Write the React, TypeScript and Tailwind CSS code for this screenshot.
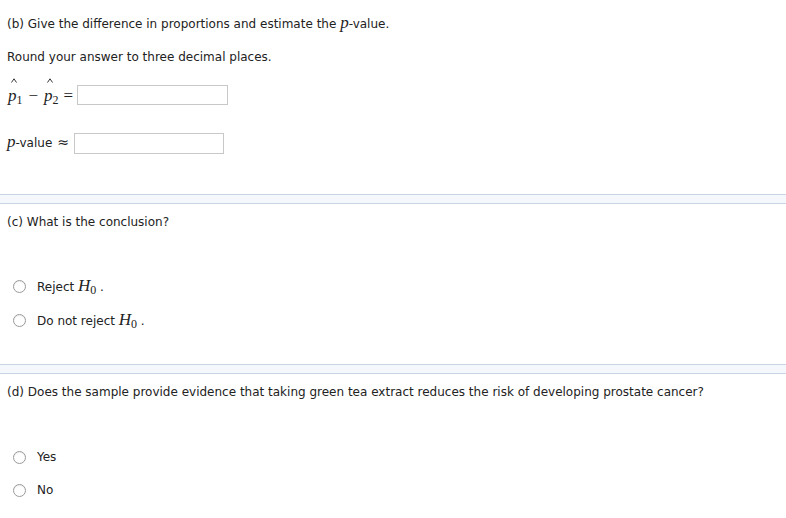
import React from "react";

const MathI: React.FC<{ children: React.ReactNode }> = ({ children }) => (
  <span className="italic text-[17px] leading-none font-['Liberation_Serif',serif]">{children}</span>
);

const Hat = () => (
  <svg className="absolute left-[3px] -top-[9px]" width="6" height="5" viewBox="0 0 6 5">
    <path d="M0.5 4.5 L3 0.8 L5.5 4.5" fill="none" stroke="#222" strokeWidth="0.9" />
  </svg>
);

const PHat: React.FC<{ sub: string }> = ({ sub }) => (
  <span className="relative inline-block leading-none font-['Liberation_Serif',serif]">
    <Hat />
    <span className="italic text-[17px]">p</span>
    <span className="text-[12px] relative top-[3px]">{sub}</span>
  </span>
);

const Radio: React.FC<{ children: React.ReactNode }> = ({ children }) => (
  <label className="flex items-center h-[20px]">
    <span className="ml-[13px] w-[13px] h-[13px] rounded-full border border-[#9a9a9a] bg-white shadow-[inset_0_1px_1px_rgba(0,0,0,0.08)]" />
    <span className="ml-[11px]">{children}</span>
  </label>
);

const H0 = () => (
  <span className="font-['Liberation_Serif',serif]">
    <span className="italic text-[17px]">H</span>
    <span className="text-[12px] relative top-[3px]">0</span>
  </span>
);

const Divider = () => <div className="h-[10px] border-y border-[#c9d5e4] bg-[#f4f7fb]" />;

const App: React.FC = () => {
  return (
    <div className="w-[786px] h-[518px] bg-white text-[#222] text-[12px] font-['DejaVu_Sans',Verdana,sans-serif] overflow-hidden">
      <div className="px-[7px] pt-[14px]">
        <p className="h-[18px] leading-[18px]">
          (b) Give the difference in proportions and estimate the <MathI>p</MathI>-value.
        </p>
        <p className="mt-[16px] h-[18px] leading-[18px]">Round your answer to three decimal places.</p>

        <div className="mt-[18px] flex items-center h-[22px] pl-[1px]">
          <PHat sub="1" />
          <span className="mx-[6px] text-[17px] leading-none font-['Liberation_Serif',serif]">−</span>
          <PHat sub="2" />
          <span className="ml-[5px] text-[17px] leading-none font-['Liberation_Serif',serif]">=</span>
          <input className="ml-[4px] w-[151px] h-[20px] border border-[#c8c8c8] bg-white outline-none" />
        </div>

        <div className="mt-[26px] flex items-end h-[22px]">
          <span className="relative top-[-2px] flex items-baseline">
            <MathI>p</MathI>
            <span>-value</span>
            <span className="ml-[5px] text-[14px] leading-none">≈</span>
          </span>
          <input className="ml-[5px] w-[150px] h-[21px] border border-[#c8c8c8] bg-white outline-none" />
        </div>
      </div>

      <div className="mt-[40px]">
        <Divider />
      </div>

      <div className="px-[7px] pt-[9px]">
        <p className="h-[18px] leading-[18px]">(c) What is the conclusion?</p>
      </div>
      <div className="mt-[45px] flex flex-col gap-[14px]">
        <Radio>
          Reject <H0 /> .
        </Radio>
        <Radio>
          Do not reject <H0 /> .
        </Radio>
      </div>

      <div className="mt-[34px]">
        <Divider />
      </div>

      <div className="px-[7px] pt-[9px]">
        <p className="h-[18px] leading-[18px]">
          (d) Does the sample provide evidence that taking green tea extract reduces the risk of developing prostate cancer?
        </p>
      </div>
      <div className="mt-[46px] flex flex-col gap-[13px]">
        <Radio>Yes</Radio>
        <Radio>No</Radio>
      </div>
    </div>
  );
};

export default App;
